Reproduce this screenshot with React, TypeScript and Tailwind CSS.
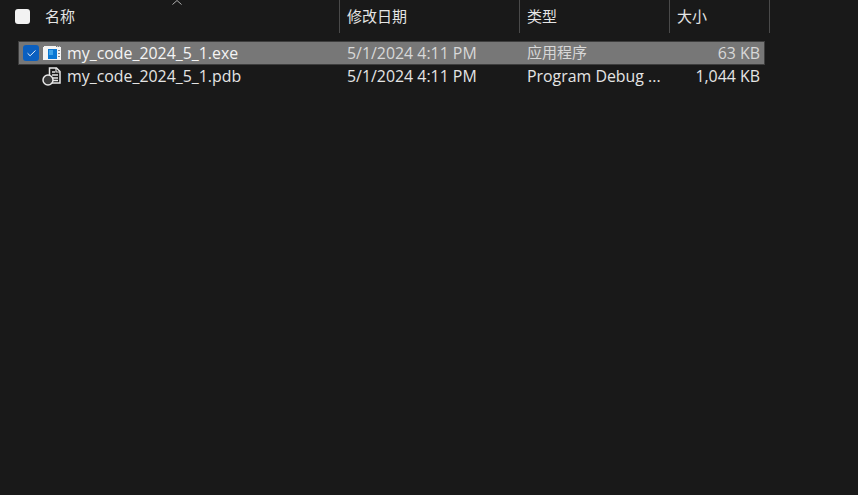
import { Check } from "lucide-react";

// Explorer details view, dark theme.
const columns = [
  { label: "修改日期", width: "w-[180px]" },
  { label: "类型", width: "w-[150px]" },
  { label: "大小", width: "w-[100px]" },
];

function ExeIcon() {
  return (
    <svg width="18" height="15" viewBox="0 0 18 15" className="shrink-0">
      <rect x="0" y="1" width="18" height="13" fill="#f4f4f4" />
      <rect x="1" y="0" width="12" height="1" fill="#f4f4f4" />
      <rect x="5" y="3" width="9" height="10" fill="#0a78d4" />
      <rect x="6" y="4" width="4" height="5" fill="#3fa4ea" />
      <path d="M14 0.500h1M16 0.500h1" stroke="#bbb" strokeWidth="1" />
      <path d="M15 4.500h2M15 7.500h2M15 10.500h2" stroke="#888" strokeWidth="1" />
    </svg>
  );
}

function PdbIcon() {
  return (
    <svg width="20" height="19" viewBox="0 0 20 19" className="shrink-0">
      <path d="M7.500 1h7l3.500 3.500V16h-10.500z" fill="#1a1a1a" stroke="#e8e8e8" strokeWidth="1.500" />
      <path d="M14 1v4h4" fill="none" stroke="#e8e8e8" strokeWidth="1.200" />
      <path d="M10 5h3M10 8h6M11 11h5M11 13.500h5" stroke="#e8e8e8" strokeWidth="1.400" />
      <circle cx="6" cy="13" r="5" fill="#3a3a3a" stroke="#e8e8e8" strokeWidth="1.500" />
    </svg>
  );
}

const latin = "text-[15.9px]";

export default function App() {
  return (
    <div className="h-[495px] w-[858px] overflow-hidden bg-[#191919] font-['Open_Sans','Noto_Sans_CJK_SC',sans-serif] text-[15px] text-[#e4e4e4]">
      <div className="flex h-[33px] w-[770px]">
        <div className="relative flex w-[340px] items-center border-r border-[#4a4a4a] pl-[15px]">
          <div className="h-[15px] w-[15px] rounded-[3px] bg-[#f2f2f2]" />
          <span className="ml-[15px]">名称</span>
          <svg width="10" height="5" viewBox="0 0 10 5" className="absolute left-[172px] top-0">
            <path d="M0.500 4.500L5 0.500L9.500 4.500" fill="none" stroke="#b0b0b0" strokeWidth="1" />
          </svg>
        </div>
        {columns.map((col) => (
          <div key={col.label} className={`flex items-center border-r border-[#4a4a4a] pl-[7px] ${col.width}`}>
            {col.label}
          </div>
        ))}
      </div>

      <div className="mt-2 ml-[18px] w-[747px]">
        <div className="flex h-6 items-center border border-[#3e3e3e] bg-[#777777]">
          <div className="ml-[4px] flex h-4 w-4 items-center justify-center rounded-[3px] bg-[#0a5fc0]">
            <Check size={11} strokeWidth={2} color="#ffffff" />
          </div>
          <div className="ml-[4px]"><ExeIcon /></div>
          <div className={`ml-[6px] w-[280px] pt-px text-[#f4f4f4] ${latin}`}>my_code_2024_5_1.exe</div>
          <div className={`w-[180px] pt-px text-[#d8d8d8] ${latin}`}>5/1/2024 4:11 PM</div>
          <div className="w-[150px] -translate-y-px text-[#d8d8d8]">应用程序</div>
          <div className={`w-[83px] pt-px text-right text-[#d8d8d8] ${latin}`}>63 KB</div>
        </div>
        <div className="flex h-[23px] items-center pl-[1px]">
          <div className="ml-[23px]"><PdbIcon /></div>
          <div className={`ml-[5px] w-[280px] ${latin}`}>my_code_2024_5_1.pdb</div>
          <div className={`w-[180px] ${latin}`}>5/1/2024 4:11 PM</div>
          <div className={`w-[150px] ${latin}`}>Program Debug ...</div>
          <div className={`w-[83px] text-right ${latin}`}>1,044 KB</div>
        </div>
      </div>
    </div>
  );
}
